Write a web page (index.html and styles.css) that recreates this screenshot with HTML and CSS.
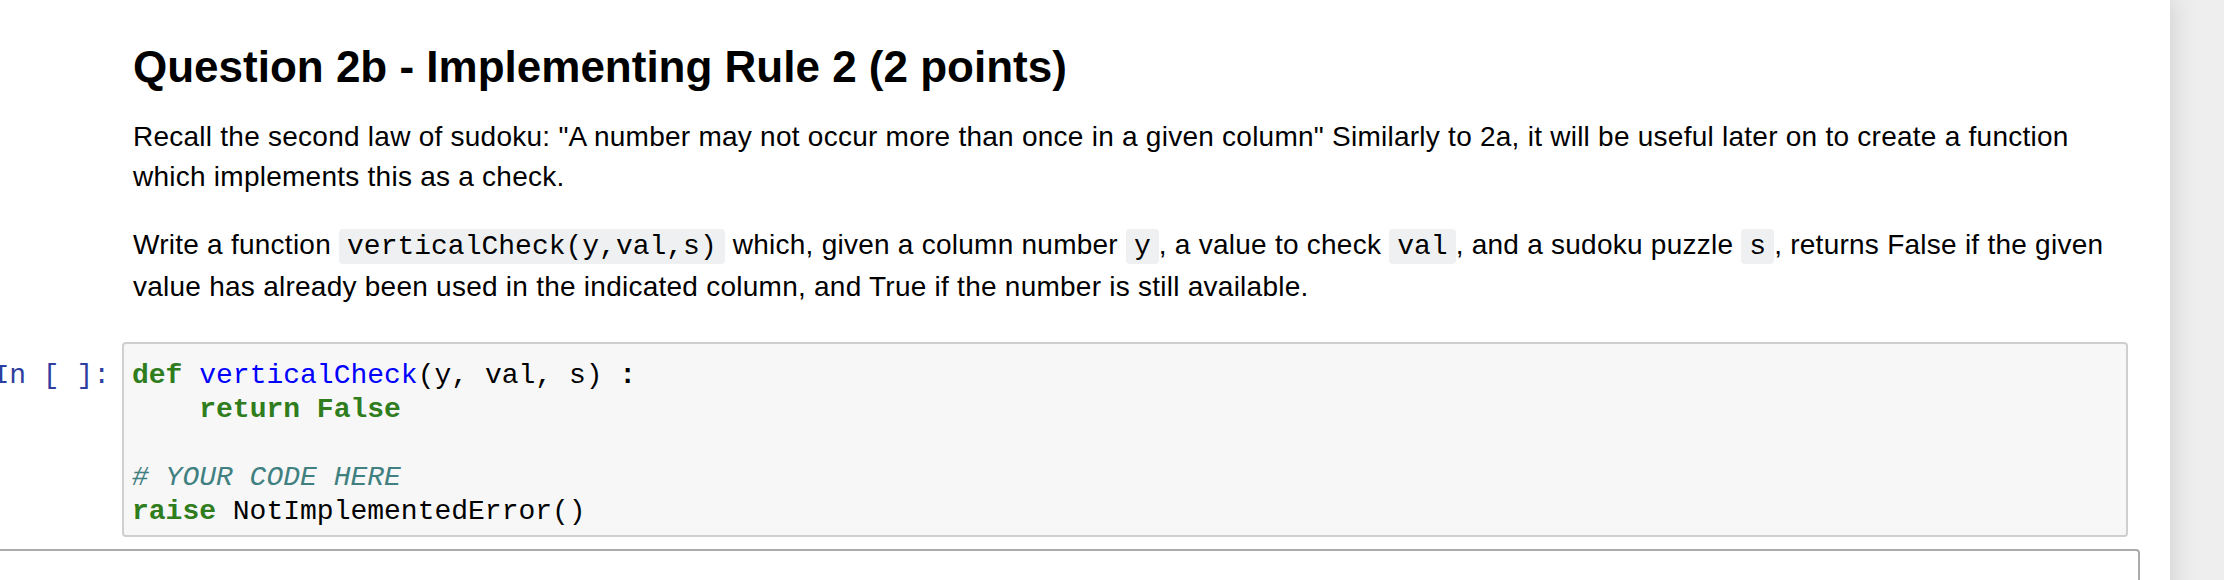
FILE: index.html
```html
<!DOCTYPE html>
<html>
<head>
<meta charset="utf-8">
<link rel="stylesheet" href="styles.css">
</head>
<body>
<div class="notebook">
  <div class="cell text-cell">
    <div class="prompt"></div>
    <div class="rendered">
      <h2 class="title">Question 2b - Implementing Rule 2 (2 points)</h2>
      <p class="para">Recall the second law of sudoku: "A number may not occur more than once in a given column" Similarly to 2a, it will be useful later on to create a function which implements this as a check.</p>
      <p class="para">Write a function <code class="inline">verticalCheck(y,val,s)</code> which, given a column number <code class="inline">y</code>, a value to check <code class="inline">val</code>, and a sudoku puzzle <code class="inline">s</code>, returns False if the given value has already been used in the indicated column, and True if the number is still available.</p>
    </div>
  </div>
  <div class="cell code-cell">
    <div class="prompt in-prompt"><span>In&nbsp;[&nbsp;]:</span></div>
    <div class="input-area">
<pre class="code"><span class="kw">def</span> <span class="def">verticalCheck</span>(y, val, s) <span class="op">:</span>
    <span class="kw">return</span> <span class="kw">False</span>

<span class="cm"># YOUR CODE HERE</span>
<span class="kw">raise</span> NotImplementedError()</pre>
    </div>
  </div>
  <div class="cell next-cell"></div>
</div>
</body>
</html>
```

FILE: styles.css
```css
html, body {
  margin: 0;
  padding: 0;
  height: 100%;
  overflow: hidden;
}

body {
  background: #eeeeee;
  font-family: "Liberation Sans", Arial, sans-serif;
  color: #000;
}

.notebook {
  margin-left: -40px;
  width: 2210px;
  box-sizing: border-box;
  min-height: 100%;
  padding: 10px 30px 0 15px;
  background: #fff;
  box-shadow: 0 0 24px 2px rgba(87, 87, 87, 0.2);
}

.cell {
  display: flex;
  border: 2px solid transparent;
  border-radius: 4px;
  padding: 10px;
}

.prompt {
  flex: 0 0 135px;
  width: 135px;
  box-sizing: border-box;
  display: flex;
  justify-content: flex-end;
  padding-right: 12px;
  white-space: nowrap;
}

.in-prompt {
  color: #303f9f;
  font-family: "Liberation Mono", "Courier New", monospace;
  font-size: 28px;
  line-height: 34px;
  padding-top: 17px;
}

.rendered {
  flex: 1;
  padding: 14px 14px 11px 11px;
}

.title {
  font-size: 44px;
  font-weight: bold;
  line-height: 44px;
  margin: 9px 0 28px 0;
}

.para {
  font-size: 28px;
  line-height: 40px;
  letter-spacing: 0.25px;
  margin: 0 0 28px 0;
}

.para:last-child {
  margin-bottom: 0;
}

.inline {
  font-family: "Liberation Mono", "Courier New", monospace;
  font-size: 28px;
  letter-spacing: 0;
  background: #eff0f1;
  border-radius: 4px;
  padding: 2px 8px;
}

.input-area {
  flex: 1;
  background: #f7f7f7;
  border: 2px solid #cfcfcf;
  border-radius: 4px;
  padding: 15px 8px 6px 8px;
}

.code {
  margin: 0;
  font-family: "Liberation Mono", "Courier New", monospace;
  font-size: 28px;
  line-height: 34px;
  color: #000;
}

.kw {
  color: #2f7d1c;
  font-weight: bold;
}

.def {
  color: #0000ff;
}

.op {
  font-weight: bold;
}

.cm {
  color: #408080;
  font-style: italic;
}

.next-cell {
  margin-top: 0;
  height: 60px;
  border-color: #ababab;
  border-radius: 0 4px 0 0;
}
```
